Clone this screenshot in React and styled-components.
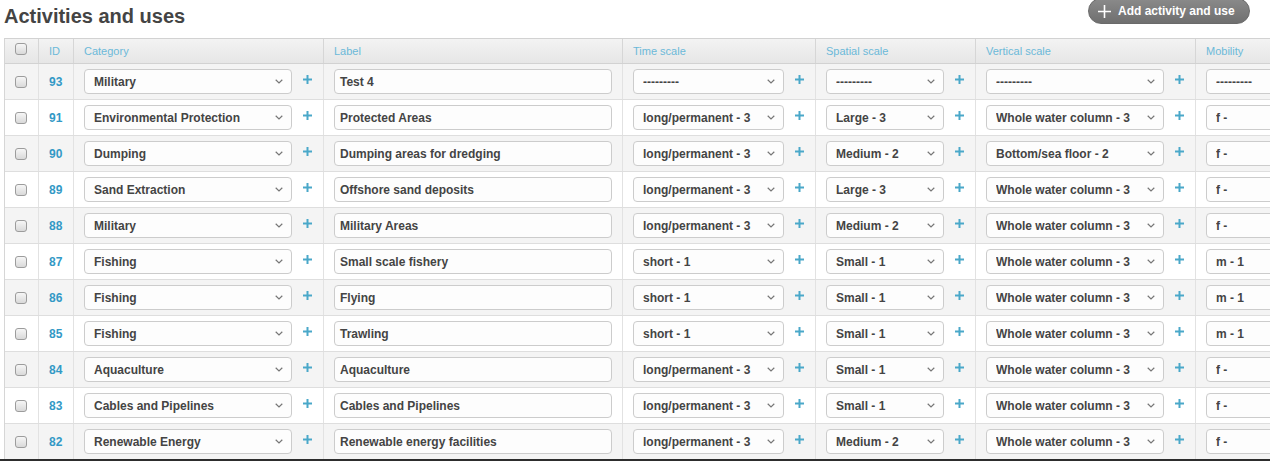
import React from "react";
import styled, { createGlobalStyle } from "styled-components";

const Global = createGlobalStyle`
  html, body { margin: 0; padding: 0; background: #fff; overflow: hidden; }
  body { font-family: "Liberation Sans", Arial, Helvetica, sans-serif; color: #444; }
  #root { width: 1270px; height: 461px; overflow: hidden; }
`;

const Page = styled.div`
  width: 1270px;
  height: 461px;
  overflow: hidden;
  display: flex;
  flex-direction: column;
`;

const TopBar = styled.div`
  height: 38px;
  display: flex;
  justify-content: space-between;
  align-items: flex-start;
  padding: 0 20px 0 4px;
  flex-shrink: 0;
`;

const Title = styled.h1`
  margin: 4px 0 0 0;
  font-size: 20px;
  line-height: 24px;
  font-weight: bold;
  color: #444;
`;

const AddButton = styled.button`
  margin-top: -2px;
  height: 26px;
  width: 162px;
  border-radius: 13px;
  border: 1px solid #6a6a6a;
  background: linear-gradient(#8a8a8a, #6f6f6f);
  color: #fff;
  font-family: inherit;
  font-weight: bold;
  font-size: 12px;
  display: flex;
  align-items: center;
  padding: 0 0 0 9px;
  gap: 7px;
  cursor: pointer;
`;

const TableWrap = styled.div`
  margin-left: 4px;
  border-left: 1px solid #d6d6d6;
  border-top: 1px solid #d2d2d2;
  width: 1400px;
  flex-shrink: 0;
`;

const COLS = "34px 35px 250px 299px 193px 160px 220px 200px";

const HeadRow = styled.div`
  display: grid;
  grid-template-columns: ${COLS};
  background: linear-gradient(#f3f3f3, #e6e6e6);
  border-bottom: 1px solid #d2d2d2;
`;

const HeadCell = styled.div`
  height: 24px;
  line-height: 24px;
  padding: 0 10px;
  border-right: 1px solid #d6d6d6;
  font-size: 11px;
  color: #6bb9d9;
  white-space: nowrap;
  overflow: hidden;
`;

const Row = styled.div`
  display: grid;
  grid-template-columns: ${COLS};
  background: ${(p) => (p.$odd ? "#f4f4f4" : "#ffffff")};
  border-bottom: ${(p) => (p.$last ? "none" : "1px solid #dedede")};
`;

const Cell = styled.div`
  height: 35px;
  box-sizing: border-box;
  padding: 5px 10px;
  border-right: 1px solid #e2e2e2;
  display: flex;
  align-items: ${(p) => (p.$top ? "flex-start" : "center")};
  overflow: hidden;
  white-space: nowrap;
`;

const Check = styled.span`
  display: inline-block;
  box-sizing: border-box;
  width: 12px;
  height: 12px;
  border: 1px solid #9c9c9c;
  border-radius: 3px;
  background: linear-gradient(#f6f6f6, #d9d9d9);
  margin-top: ${(p) => (p.$head ? "3px" : "0")};
`;

const IdLink = styled.span`
  font-size: 12px;
  font-weight: bold;
  color: #3399c6;
`;

const SelectBox = styled.div`
  flex: 1;
  min-width: 0;
  height: 25px;
  box-sizing: border-box;
  border: 1px solid #cccccc;
  border-radius: 4px;
  background: #fdfdfd;
  display: flex;
  align-items: center;
  padding: 0 8px 0 9px;
  font-size: 12px;
  font-weight: bold;
  color: #444;
`;

const SelectText = styled.span`
  flex: 1;
  overflow: hidden;
`;

const TextInput = styled.div`
  flex: 1;
  height: 25px;
  box-sizing: border-box;
  border: 1px solid #cccccc;
  border-radius: 4px;
  background: #fdfdfd;
  display: flex;
  align-items: center;
  padding: 0 5px;
  font-size: 12px;
  font-weight: bold;
  color: #444;
`;

const PlusBox = styled.div`
  width: 21px;
  flex-shrink: 0;
  padding: 6px 0 0 11px;
  box-sizing: border-box;
  height: 25px;
  display: flex;
  align-items: flex-start;
`;

const Chevron = () => (
  <svg width="8" height="5" viewBox="0 0 8 5" style={{ flexShrink: 0 }}>
    <path d="M0.7 0.8 L4 4 L7.3 0.8" fill="none" stroke="#777" strokeWidth="1.2" />
  </svg>
);

const Plus = () => (
  <svg width="9" height="9" viewBox="0 0 9 9" style={{ display: "block" }}>
    <path d="M4.5 0 V9 M0 4.5 H9" stroke="#4aa8c9" strokeWidth="2" />
  </svg>
);

const ButtonPlus = () => (
  <svg width="13" height="13" viewBox="0 0 13 13" style={{ display: "block" }}>
    <path d="M6.5 0 V13 M0 6.5 H13" stroke="#fff" strokeWidth="1.6" />
  </svg>
);

const Select = ({ value }) => (
  <SelectBox>
    <SelectText>{value}</SelectText>
    <Chevron />
  </SelectBox>
);

const D = "---------";
const W = "Whole water column - 3";
const L = "long/permanent - 3";

const rows = [
  [93, "Military", "Test 4", D, D, D, D],
  [91, "Environmental Protection", "Protected Areas", L, "Large - 3", W, "f -"],
  [90, "Dumping", "Dumping areas for dredging", L, "Medium - 2", "Bottom/sea floor - 2", "f -"],
  [89, "Sand Extraction", "Offshore sand deposits", L, "Large - 3", W, "f -"],
  [88, "Military", "Military Areas", L, "Medium - 2", W, "f -"],
  [87, "Fishing", "Small scale fishery", "short - 1", "Small - 1", W, "m - 1"],
  [86, "Fishing", "Flying", "short - 1", "Small - 1", W, "m - 1"],
  [85, "Fishing", "Trawling", "short - 1", "Small - 1", W, "m - 1"],
  [84, "Aquaculture", "Aquaculture", L, "Small - 1", W, "f -"],
  [83, "Cables and Pipelines", "Cables and Pipelines", L, "Small - 1", W, "f -"],
  [82, "Renewable Energy", "Renewable energy facilities", L, "Medium - 2", W, "f -"],
];

const BottomBar = styled.div`
  height: 3px;
  background: #2d2d2d;
  flex-shrink: 0;
`;

const SelectWithPlus = ({ value }) => (
  <>
    <Select value={value} />
    <PlusBox>
      <Plus />
    </PlusBox>
  </>
);

export default function App() {
  return (
    <Page>
      <Global />
      <TopBar>
        <Title>Activities and uses</Title>
        <AddButton>
          <ButtonPlus />
          Add activity and use
        </AddButton>
      </TopBar>
      <TableWrap>
        <HeadRow>
          <HeadCell>
            <Check $head />
          </HeadCell>
          <HeadCell>ID</HeadCell>
          <HeadCell>Category</HeadCell>
          <HeadCell>Label</HeadCell>
          <HeadCell>Time scale</HeadCell>
          <HeadCell>Spatial scale</HeadCell>
          <HeadCell>Vertical scale</HeadCell>
          <HeadCell>Mobility</HeadCell>
        </HeadRow>
        {rows.map((r, i) => (
          <Row key={r[0]} $odd={i % 2 === 0} $last={i === rows.length - 1}>
            <Cell>
              <Check />
            </Cell>
            <Cell>
              <IdLink>{r[0]}</IdLink>
            </Cell>
            <Cell $top>
              <SelectWithPlus value={r[1]} />
            </Cell>
            <Cell>
              <TextInput>{r[2]}</TextInput>
            </Cell>
            <Cell $top>
              <SelectWithPlus value={r[3]} />
            </Cell>
            <Cell $top>
              <SelectWithPlus value={r[4]} />
            </Cell>
            <Cell $top>
              <SelectWithPlus value={r[5]} />
            </Cell>
            <Cell>
              <Select value={r[6]} />
            </Cell>
          </Row>
        ))}
      </TableWrap>
      <BottomBar />
    </Page>
  );
}
